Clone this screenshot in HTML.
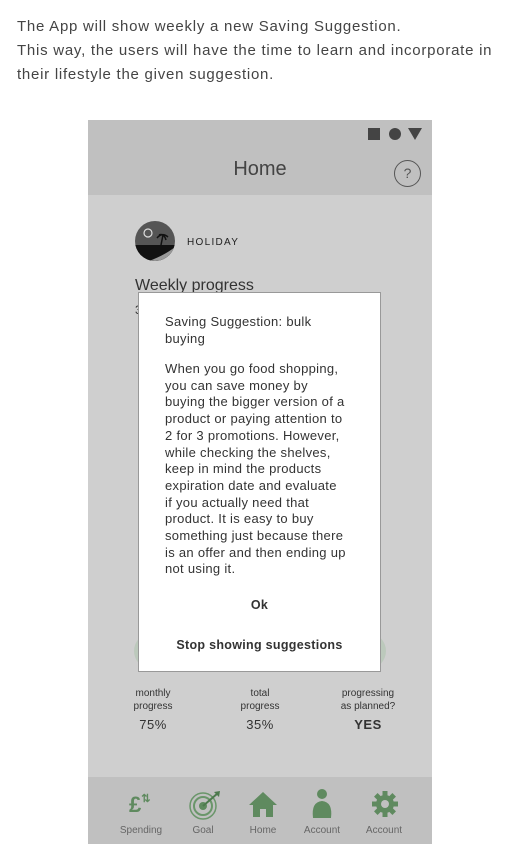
<!DOCTYPE html>
<html><head><meta charset="utf-8"><style>
*{margin:0;padding:0;box-sizing:border-box}
body{width:520px;height:852px;background:#fff;font-family:"Liberation Sans",sans-serif;position:relative;overflow:hidden;color:#333}
.intro{position:absolute;left:17px;top:15px;font-size:15px;line-height:24px;color:#444;letter-spacing:.75px;white-space:nowrap}
.phone{position:absolute;left:88px;top:120px;width:344px;height:724px;background:#cfcfcf}
.top{position:absolute;left:0;top:0;width:344px;height:75px;background:#c0c0c0}
.title{position:absolute;left:0;width:344px;top:38px;text-align:center;font-size:20px;color:#444}
.nav{position:absolute;left:0;top:657px;width:344px;height:67px;background:#c0c0c0}
.nl{position:absolute;top:705px;font-size:10px;color:#666;width:60px;text-align:center}
.stat{position:absolute;top:567px;width:80px;text-align:center;font-size:10px;line-height:13px;color:#333}
.stat b{display:block;font-weight:normal;font-size:13px;margin-top:5px;color:#333;letter-spacing:.5px}
.dlg{position:absolute;left:138px;top:292px;width:243px;height:380px;background:#fff;border:1px solid #999;font-size:13px;color:#333;letter-spacing:.3px}
.dlg .h{position:absolute;left:26px;top:21px;line-height:16.6px}
.dlg .t{position:absolute;left:26px;top:68px;line-height:16.7px;width:215px;white-space:nowrap}
.dlg .btn{position:absolute;left:0;width:241px;text-align:center;font-weight:bold;font-size:12.5px;color:#333}
</style></head><body>
<div class="intro">The App will show weekly a new Saving Suggestion.<br>This way, the users will have the time to learn and incorporate in<br>their lifestyle the given suggestion.</div>
<div class="phone">
 <div class="top">
  <div style="position:absolute;left:280px;top:8px;width:12px;height:12px;background:#444"></div>
  <div style="position:absolute;left:301px;top:8px;width:12px;height:12px;border-radius:50%;background:#444"></div>
  <div style="position:absolute;left:320px;top:8px;width:0;height:0;border-left:7px solid transparent;border-right:7px solid transparent;border-top:12px solid #444"></div>
  <div class="title">Home</div>
  <div style="position:absolute;left:306px;top:40px;width:27px;height:27px;border:1.5px solid #555;border-radius:50%;text-align:center;line-height:24px;font-size:14px;color:#555">?</div>
 </div>
 <svg style="position:absolute;left:47px;top:101px" width="40" height="40" viewBox="0 0 40 40"><defs><clipPath id="c"><circle cx="20" cy="20" r="20"/></clipPath></defs><g clip-path="url(#c)"><rect width="40" height="40" fill="#555"/><rect y="24" width="40" height="16" fill="#111"/><path d="M14 40 Q30 34 40 26 L40 40Z" fill="#999"/><path d="M26 24 L28 14 M22 17 Q27 11 33 16 M24 14 Q29 12 31 19" stroke="#111" stroke-width="1.5" fill="none"/></g><circle cx="13" cy="12" r="4" fill="none" stroke="#ddd" stroke-width="1.2"/></svg>
 <div style="position:absolute;left:99px;top:117px;font-size:10px;letter-spacing:1.3px;color:#222">HOLIDAY</div>
 <div style="position:absolute;left:47px;top:157px;font-size:16px;color:#333">Weekly progress</div>
 <div style="position:absolute;left:46px;top:513px;width:36px;height:36px;border-radius:50%;background:#bcc9bc"></div>
 <div style="position:absolute;left:154px;top:513px;width:36px;height:36px;border-radius:50%;background:#bcc9bc"></div>
 <div style="position:absolute;left:262px;top:513px;width:36px;height:36px;border-radius:50%;background:#bcc9bc"></div>
 <div class="stat" style="left:25px">monthly<br>progress<b>75%</b></div>
 <div class="stat" style="left:132px">total<br>progress<b>35%</b></div>
 <div class="stat" style="left:240px">progressing<br>as planned?<b style="font-weight:bold">YES</b></div>
 <div class="nav"></div>
 <div style="position:absolute;left:41px;top:672px;font-size:22px;font-weight:bold;color:#5f8a5f">£<span style="font-size:11px;position:relative;top:-10px">⇅</span></div>
 <svg style="position:absolute;left:100px;top:670px" width="34" height="30" viewBox="0 0 34 30"><circle cx="15" cy="16" r="13" fill="none" stroke="#6a966a" stroke-width="1.5"/><circle cx="15" cy="16" r="9" fill="none" stroke="#6a966a" stroke-width="2"/><circle cx="15" cy="16" r="4" fill="#5f8a5f"/><path d="M15 16 L30 3" stroke="#4d7a4d" stroke-width="2"/><path d="M26 2 L32 1 L31 7Z" fill="#4d7a4d"/></svg>
 <svg style="position:absolute;left:160px;top:670px" width="30" height="28" viewBox="0 0 30 28"><path d="M15 2 L29 15 L25 15 L25 27 L18 27 L18 19 L12 19 L12 27 L5 27 L5 15 L1 15Z" fill="#5f8a5f"/></svg>
 <svg style="position:absolute;left:222px;top:668px" width="24" height="32" viewBox="0 0 24 32"><circle cx="12" cy="6" r="5" fill="#5f8a5f"/><path d="M3 30 Q1 14 12 13 Q23 14 21 30Z" fill="#5f8a5f"/></svg>
 <svg style="position:absolute;left:283px;top:670px" width="28" height="28" viewBox="0 0 28 28"><g fill="#5f8a5f"><circle cx="14" cy="14" r="9"/><g id="t"><rect x="11.5" y="1" width="5" height="6"/><rect x="11.5" y="21" width="5" height="6"/></g><use href="#t" transform="rotate(45 14 14)"/><use href="#t" transform="rotate(90 14 14)"/><use href="#t" transform="rotate(135 14 14)"/></g><circle cx="14" cy="14" r="4" fill="#c0c0c0"/></svg>
 <div class="nl" style="left:23px">Spending</div>
 <div class="nl" style="left:85px">Goal</div>
 <div class="nl" style="left:145px">Home</div>
 <div class="nl" style="left:204px">Account</div>
 <div class="nl" style="left:266px">Account</div>
</div>
<div style="position:absolute;left:135px;top:303px;font-size:12px;color:#333">3</div>
<div class="dlg">
 <div class="h">Saving Suggestion: bulk<br>buying</div>
 <div class="t">When you go food shopping,<br>you can save money by<br>buying the bigger version of a<br>product or paying attention to<br>2 for 3 promotions. However,<br>while checking the shelves,<br>keep in mind the products<br>expiration date and evaluate<br>if you actually need that<br>product. It is easy to buy<br>something just because there<br>is an offer and then ending up<br>not using it.</div>
 <div class="btn" style="top:305px">Ok</div>
 <div class="btn" style="top:345px">Stop showing suggestions</div>
</div>
</body></html>
